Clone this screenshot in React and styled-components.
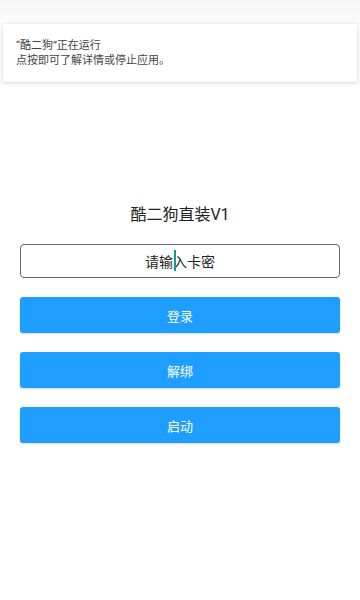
import React from "react";
import styled, { createGlobalStyle } from "styled-components";

const GlobalStyle = createGlobalStyle`
  html, body {
    margin: 0;
    padding: 0;
    background: #fff;
    font-family: Roboto, "Noto Sans CJK SC", "Noto Sans", sans-serif;
  }
`;

const Screen = styled.div`
  width: 360px;
  height: 600px;
  background: #fff;
  display: flex;
  flex-direction: column;
  overflow: hidden;
`;

const StatusShade = styled.div`
  height: 24px;
  background: linear-gradient(#f7f7f7, #fbfbfb);
`;

const Notice = styled.div`
  margin: 0 3px;
  height: 58px;
  background: #fff;
  border-radius: 2px;
  box-shadow: 0 1px 4px rgba(0, 0, 0, 0.18);
  padding: 14px 13px 0;
  box-sizing: border-box;
  color: #444;
  font-size: 11px;
  line-height: 15px;
`;

const Content = styled.div`
  display: flex;
  flex-direction: column;
  padding: 122px 20px 0;
`;

const Title = styled.div`
  text-align: center;
  font-size: 16px;
  color: #222;
  line-height: 22px;
`;

const InputBox = styled.div`
  margin-top: 18px;
  height: 34px;
  border: 1.5px solid #666;
  border-radius: 4px;
  display: flex;
  align-items: center;
  justify-content: center;
  font-size: 14px;
  color: #222;
  box-sizing: border-box;
`;

const Placeholder = styled.span`
  position: relative;
`;

const Caret = styled.span`
  position: absolute;
  left: 29px;
  top: -1px;
  width: 2px;
  height: 21px;
  background: #139b8c;
`;

const Buttons = styled.div`
  display: flex;
  flex-direction: column;
  gap: 19px;
  margin-top: 19px;
`;

const Button = styled.button`
  height: 36px;
  border: none;
  border-radius: 3px;
  background: #1e9fff;
  color: #fff;
  font-family: inherit;
  font-size: 13px;
  box-shadow: 0 1px 2px rgba(0, 0, 0, 0.15);
  padding: 0;
`;

export default function App() {
  return (
    <Screen>
      <GlobalStyle />
      <StatusShade />
      <Notice>
        <div>“酷二狗”正在运行</div>
        <div>点按即可了解详情或停止应用。</div>
      </Notice>
      <Content>
        <Title>酷二狗直装V1</Title>
        <InputBox>
          <Placeholder>
            请输入卡密
            <Caret />
          </Placeholder>
        </InputBox>
        <Buttons>
          <Button>登录</Button>
          <Button>解绑</Button>
          <Button>启动</Button>
        </Buttons>
      </Content>
    </Screen>
  );
}
